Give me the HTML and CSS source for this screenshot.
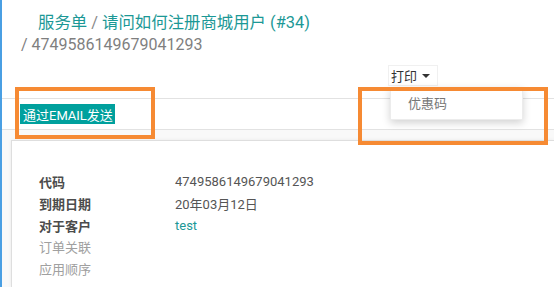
FILE: index.html
```html
<!DOCTYPE html>
<html lang="zh-CN">
<head>
<meta charset="utf-8">
<link rel="stylesheet" href="styles.css">
</head>
<body>
<div class="app">
  <div class="control-panel">
    <div class="bc-title"><span class="bc-link">服务单</span><span class="bc-sep"> / </span><span class="bc-link">请问如何注册商城用户 (#34)</span></div>
    <div class="bc-sub">/ 4749586149679041293</div>
    <div class="cp-actions">
      <div class="print-wrap">
        <button class="print-btn">打印 <span class="caret"></span></button>
        <div class="dropdown"><div class="dd-item">优惠码</div></div>
      </div>
    </div>
  </div>
  <div class="statusbar">
    <button class="btn-primary">通过EMAIL发送</button>
  </div>
  <div class="content">
    <div class="sheet">
      <div class="fields">
        <div class="label">代码</div><div class="value">4749586149679041293</div>
        <div class="label">到期日期</div><div class="value">20年03月12日</div>
        <div class="label">对于客户</div><div class="value link">test</div>
        <div class="label muted">订单关联</div><div class="value"></div>
        <div class="label muted">应用顺序</div><div class="value"></div>
      </div>
    </div>
  </div>
  <div class="mark mark-left"></div>
  <div class="mark mark-right"></div>
</div>
</body>
</html>
```
FILE: styles.css
```css
html, body {
  margin: 0;
  padding: 0;
  background: #fff;
}
body {
  font-family: Roboto, "Noto Sans CJK SC", sans-serif;
  color: #4c4c4c;
}
.app {
  position: relative;
  height: 287px;
  border-left: 2px solid #4a9fe3;
  display: flex;
  flex-direction: column;
  overflow: hidden;
}
.control-panel {
  padding-top: 11px;
  height: 99px;
  flex: none;
  box-sizing: border-box;
  border-bottom: 1px solid #e2e2e2;
}
.bc-title {
  padding-left: 36px;
  font-size: 16.4px;
  line-height: 23px;
  color: #1c9896;
}
.bc-sep {
  color: #8a8a8a;
}
.bc-sub {
  padding-left: 19px;
  font-size: 16px;
  line-height: 22px;
  color: #7f7f7f;
}
.cp-actions {
  display: flex;
  justify-content: flex-end;
  padding-right: 116px;
  margin-top: 9px;
}
.print-wrap {
  position: relative;
}
.print-btn {
  font-family: Roboto, "Noto Sans CJK SC", sans-serif;
  font-size: 13px;
  color: #333;
  background: #fff;
  border: 1px solid #f0f0f0;
  height: 21px;
  padding: 0 7px 0 2px;
  display: flex;
  align-items: center;
  gap: 5px;
}
.caret {
  width: 0;
  height: 0;
  border-left: 4px solid transparent;
  border-right: 4px solid transparent;
  border-top: 4px solid #333;
}
.dropdown {
  position: absolute;
  left: 2px;
  top: 22px;
  width: 133px;
  height: 33px;
  background: #fff;
  box-shadow: 0 3px 8px rgba(0,0,0,0.18);
  border: 1px solid #ececec;
  box-sizing: border-box;
  z-index: 2;
}
.dd-item {
  padding-left: 17px;
  font-size: 13px;
  line-height: 31px;
  color: #777;
}
.statusbar {
  height: 31px;
  flex: none;
  box-sizing: border-box;
  padding: 5px 0 0 18px;
  border-bottom: 1px solid #e2e2e2;
}
.btn-primary {
  font-family: Roboto, "Noto Sans CJK SC", sans-serif;
  font-size: 13px;
  color: #fff;
  background: #00a09d;
  border: none;
  height: 20px;
  padding: 0 2px 0 3px;
  display: flex;
  align-items: center;
}
.content {
  flex: 1;
  background: #f9f9f9;
  padding: 10px 0 0 9px;
}
.sheet {
  background: #fff;
  border: 1px solid #dedede;
  border-right: none;
  border-bottom: none;
  height: 100%;
  box-sizing: border-box;
  padding: 30px 0 0 27px;
  box-shadow: 0 0 4px rgba(0,0,0,0.06);
}
.fields {
  display: grid;
  grid-template-columns: 136px 1fr;
  grid-auto-rows: 21.7px;
  align-items: center;
  font-size: 13px;
}
.label {
  font-weight: bold;
  color: #4c4c4c;
}
.label.muted {
  font-weight: normal;
  color: #a0a0a0;
}
.value {
  color: #555;
}
.value.link {
  color: #1c9896;
}
.mark {
  position: absolute;
  border: 4px solid #f68a33;
  box-sizing: border-box;
  z-index: 5;
}
.mark-left {
  left: 13px;
  top: 87px;
  width: 140px;
  height: 52px;
}
.mark-right {
  left: 356px;
  top: 87px;
  width: 190px;
  height: 58px;
}
```
